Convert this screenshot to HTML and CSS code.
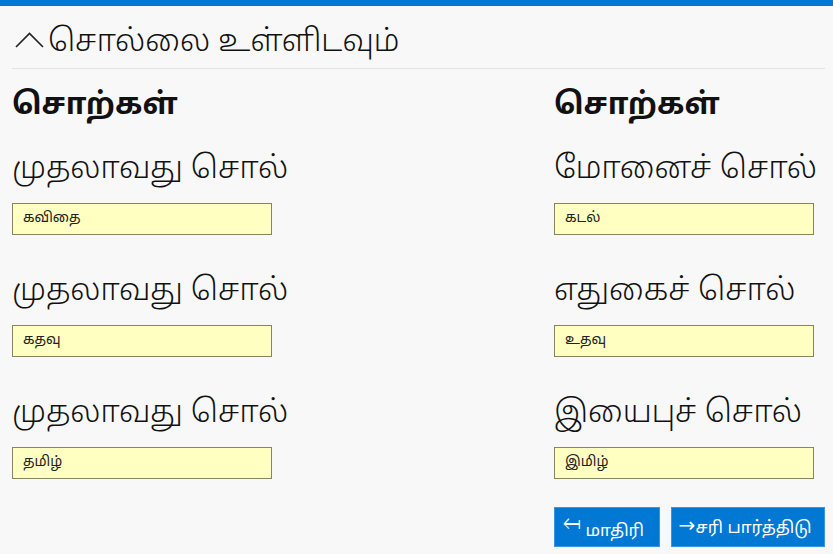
FILE: index.html
```html
<!DOCTYPE html>
<html lang="ta">
<head>
<meta charset="utf-8">
<link rel="stylesheet" href="styles.css">
</head>
<body>
<div class="topbar"></div>
<div class="page">
  <div class="header">
    <svg class="caret" width="30" height="16" viewBox="0 0 30 16"><path d="M1 15 L14.5 1.5 L28 15" fill="none" stroke="#222" stroke-width="1.6"/></svg>
    <span class="title">சொல்லை உள்ளிடவும்</span>
  </div>
  <div class="cols">
    <div class="col left">
      <h2 class="colhead">சொற்கள்</h2>
      <div class="field">
        <div class="label">முதலாவது சொல்</div>
        <div class="input">கவிதை</div>
      </div>
      <div class="field">
        <div class="label">முதலாவது சொல்</div>
        <div class="input">கதவு</div>
      </div>
      <div class="field">
        <div class="label">முதலாவது சொல்</div>
        <div class="input">தமிழ்</div>
      </div>
    </div>
    <div class="col right">
      <h2 class="colhead">சொற்கள்</h2>
      <div class="field">
        <div class="label">மோனைச் சொல்</div>
        <div class="input">கடல்</div>
      </div>
      <div class="field">
        <div class="label">எதுகைச் சொல்</div>
        <div class="input">உதவு</div>
      </div>
      <div class="field">
        <div class="label">இயைபுச் சொல்</div>
        <div class="input">இமிழ்</div>
      </div>
      <div class="buttons">
        <button class="btn back"><span class="arrow">↤</span> மாதிரி</button>
        <button class="btn next"><span class="arrow2">→</span>சரி பார்த்திடு</button>
      </div>
    </div>
  </div>
</div>
</body>
</html>
```

FILE: styles.css
```css
html, body {
  margin: 0;
  padding: 0;
  background: #f8f8f8;
  font-family: "Noto Sans Tamil", "Noto Sans", sans-serif;
  color: #111;
}
.topbar {
  height: 6px;
  background: #0078d4;
}
.page {
  padding: 0 8px 0 12px;
}
.header {
  display: flex;
  align-items: center;
  box-sizing: border-box;
  height: 63px;
  padding-top: 12px;
  border-bottom: 1px solid #e2e2e2;
  gap: 3px;
}
.caret {
  margin-left: 3px;
  margin-top: -7px;
}
.title {
  font-size: 31px;
  line-height: 1;
  font-weight: 300;
}
.cols {
  display: flex;
  justify-content: space-between;
}
.col.left {
  width: 260px;
}
.col.right {
  width: 271px;
}
.colhead {
  margin: 18px 0 0 0;
  font-size: 30px;
  font-weight: bold;
  line-height: 40px;
  height: 40px;
}
.field {
  margin-top: 19px;
}
.field + .field {
  margin-top: 33px;
}
.label {
  font-size: 31px;
  font-weight: 300;
  line-height: 42px;
  height: 42px;
  padding-top: 3px;
  white-space: nowrap;
}
.input {
  margin-top: 12px;
  box-sizing: border-box;
  width: 260px;
  height: 32px;
  border: 1px solid #85855e;
  background: #ffffc2;
  font-size: 14px;
  line-height: 30px;
  padding-left: 10px;
  color: #222;
}
.buttons {
  display: flex;
  gap: 11px;
  margin-top: 28px;
}
.btn {
  background: #0078d4;
  color: #fff;
  border: 1px solid #3a95e0;
  height: 40px;
  font-family: inherit;
  font-size: 17px;
  padding: 0 8px 2px 8px;
  white-space: nowrap;
  text-align: left;
}
.btn.back { width: 106px; }
.btn.next { width: 155px; padding-left: 7px; }
.arrow { font-family: "DejaVu Sans", sans-serif; font-size: 20px; vertical-align: 7px; font-weight: 300; }
.arrow2 { font-family: "DejaVu Sans", sans-serif; font-size: 20px; vertical-align: 1px; }
```
